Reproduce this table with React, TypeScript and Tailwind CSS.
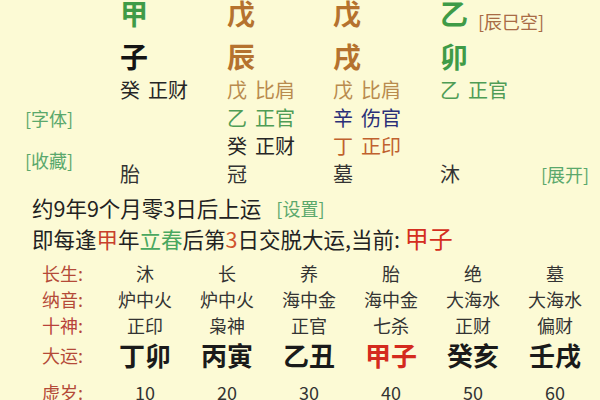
import React from "react";

function Cell({ w, children }: { w: string; children: React.ReactNode }) {
  return <div className={`${w} shrink-0 whitespace-nowrap`}>{children}</div>;
}

function Hid({ a, b, color }: { a: string; b: string; color: string }) {
  return (
    <span className={color}>
      <span className="mr-[8px]">{a}</span>
      {b}
    </span>
  );
}

export default function App() {
  const cols = ["w-[107px]", "w-[106px]", "w-[107px]", "w-[101px]"];
  const tableCols = [
    { cs: "沐", ny: "炉中火", ss: "正印", dy: "丁卯", age: "10", red: false },
    { cs: "长", ny: "炉中火", ss: "枭神", dy: "丙寅", age: "20", red: false },
    { cs: "养", ny: "海中金", ss: "正官", dy: "乙丑", age: "30", red: false },
    { cs: "胎", ny: "海中金", ss: "七杀", dy: "甲子", age: "40", red: true },
    { cs: "绝", ny: "大海水", ss: "正财", dy: "癸亥", age: "50", red: false },
    { cs: "墓", ny: "大海水", ss: "偏财", dy: "壬戌", age: "60", red: false },
  ];
  return (
    <div className="w-[600px] h-[400px] overflow-hidden bg-[#fcfad5] font-['Noto_Sans_CJK_SC',sans-serif] text-[#2a2a2a]">
      {/* top pillars */}
      <div className="flex">
        <div className="w-[120px] shrink-0 pl-[25px] text-[18px] text-[#5aa86c]">
          <div className="mt-[108px] leading-[20px] whitespace-nowrap">[字体]</div>
          <div className="mt-[22px] leading-[20px] whitespace-nowrap">[收藏]</div>
        </div>
        <div className="flex flex-col">
          <div className="flex h-[26px] leading-[26px] text-[28px] font-semibold">
            <Cell w={cols[0]}><span className="text-[#3f9b47]">甲</span></Cell>
            <Cell w={cols[1]}><span className="text-[#b5722e]">戊</span></Cell>
            <Cell w={cols[2]}><span className="text-[#b5722e]">戊</span></Cell>
            <div className="flex items-center whitespace-nowrap">
              <span className="text-[#3f9b47]">乙</span>
              <span className="ml-[10px] pt-[16px] text-[18px] font-normal text-[#a86b45]">[辰巳空]</span>
            </div>
          </div>
          <div className="flex pt-[10px] h-[50px] leading-[40px] text-[28px] font-semibold">
            <Cell w={cols[0]}><span className="text-[#141414]">子</span></Cell>
            <Cell w={cols[1]}><span className="text-[#b5722e]">辰</span></Cell>
            <Cell w={cols[2]}><span className="text-[#b5722e]">戌</span></Cell>
            <Cell w={cols[3]}><span className="text-[#3f9b47]">卯</span></Cell>
          </div>
          <div className="flex h-[28px] leading-[28px] text-[20px]">
            <Cell w={cols[0]}><Hid a="癸" b="正财" color="text-[#262626]" /></Cell>
            <Cell w={cols[1]}><Hid a="戊" b="比肩" color="text-[#b98b4e]" /></Cell>
            <Cell w={cols[2]}><Hid a="戊" b="比肩" color="text-[#b98b4e]" /></Cell>
            <Cell w={cols[3]}><Hid a="乙" b="正官" color="text-[#4f9c55]" /></Cell>
          </div>
          <div className="flex h-[28px] leading-[28px] text-[20px]">
            <Cell w={cols[0]}><span></span></Cell>
            <Cell w={cols[1]}><Hid a="乙" b="正官" color="text-[#4f9c55]" /></Cell>
            <Cell w={cols[2]}><Hid a="辛" b="伤官" color="text-[#2a2f78]" /></Cell>
          </div>
          <div className="flex h-[28px] leading-[28px] text-[20px]">
            <Cell w={cols[0]}><span></span></Cell>
            <Cell w={cols[1]}><Hid a="癸" b="正财" color="text-[#262626]" /></Cell>
            <Cell w={cols[2]}><Hid a="丁" b="正印" color="text-[#c0612e]" /></Cell>
          </div>
          <div className="flex h-[28px] leading-[28px] text-[20px] text-[#333]">
            <Cell w={cols[0]}>胎</Cell>
            <Cell w={cols[1]}>冠</Cell>
            <Cell w={cols[2]}>墓</Cell>
            <Cell w={cols[3]}>沐</Cell>
            <div className="whitespace-nowrap text-[18px] text-[#5aa86c]">[展开]</div>
          </div>
        </div>
      </div>

      {/* start luck lines */}
      <div className="pl-[32px] mt-[5px] text-[21.5px] text-[#222]">
        <div className="h-[30px] leading-[30px] whitespace-nowrap flex items-center">
          <span>约9年9个月零3日后上运</span>
          <span className="ml-[15px] text-[18px] text-[#5aa86c]">[设置]</span>
        </div>
        <div className="h-[30px] leading-[30px] whitespace-nowrap">
          即每逢<span className="text-[#c8402c]">甲</span>年<span className="text-[#4aa860]">立春</span>后第<span className="text-[#d0532c]">3</span>日交脱大运,当前:{" "}
          <span className="text-[24px] text-[#d42e20]">甲子</span>
        </div>
      </div>

      {/* da yun table */}
      <div className="pl-[42px] mt-[7px] text-[18px]">
        <div className="flex h-[26px] leading-[26px]">
          <div className="w-[62px] shrink-0 text-[#b44a38]">长生:</div>
          {tableCols.map((c, i) => (
            <div key={i} className="w-[82px] shrink-0 text-center text-[#333]">{c.cs}</div>
          ))}
        </div>
        <div className="flex h-[26px] leading-[26px]">
          <div className="w-[62px] shrink-0 text-[#b44a38]">纳音:</div>
          {tableCols.map((c, i) => (
            <div key={i} className="w-[82px] shrink-0 text-center text-[#333]">{c.ny}</div>
          ))}
        </div>
        <div className="flex h-[27px] leading-[27px]">
          <div className="w-[62px] shrink-0 text-[#b8423a]">十神:</div>
          {tableCols.map((c, i) => (
            <div key={i} className="w-[82px] shrink-0 text-center text-[#333]">{c.ss}</div>
          ))}
        </div>
        <div className="flex h-[32px] leading-[32px] items-center">
          <div className="w-[62px] shrink-0 text-[#b44a38]">大运:</div>
          {tableCols.map((c, i) => (
            <div
              key={i}
              className={`w-[82px] shrink-0 text-center text-[26px] font-bold ${c.red ? "text-[#d42a1e]" : "text-[#1a1a1a]"}`}
            >
              {c.dy}
            </div>
          ))}
        </div>
        <div className="flex h-[42px] leading-[42px]">
          <div className="w-[62px] shrink-0 text-[#b44a38]">虚岁:</div>
          {tableCols.map((c, i) => (
            <div key={i} className="w-[82px] shrink-0 text-center text-[#333]">{c.age}</div>
          ))}
        </div>
      </div>
    </div>
  );
}
